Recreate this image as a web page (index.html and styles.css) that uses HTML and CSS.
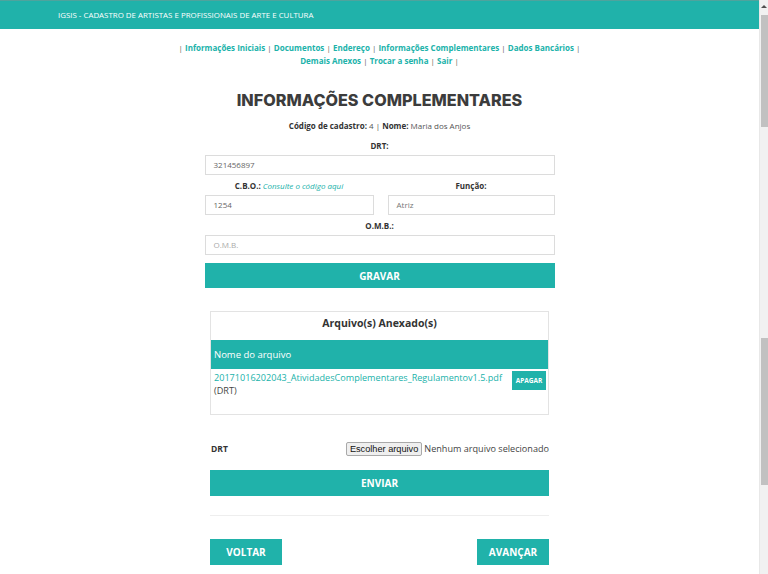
FILE: index.html
```html
<!DOCTYPE html>
<html lang="pt-BR">
<head>
<meta charset="utf-8">
<title>IGSIS - Informações Complementares</title>
<link rel="stylesheet" href="styles.css">
</head>
<body>
<div class="viewport">
  <header class="topbar"><span class="brand">IGSIS - CADASTRO DE ARTISTAS E PROFISSIONAIS DE ARTE E CULTURA</span></header>
  <nav class="menu">
    <div class="menu-line"><span class="sep">|</span> <a>Informações Iniciais</a> <span class="sep">|</span> <a>Documentos</a> <span class="sep">|</span> <a>Endereço</a> <span class="sep">|</span> <a>Informações Complementares</a> <span class="sep">|</span> <a>Dados Bancários</a> <span class="sep">|</span></div>
    <div class="menu-line"><a>Demais Anexos</a> <span class="sep">|</span> <a>Trocar a senha</a> <span class="sep">|</span> <a>Sair</a> <span class="sep">|</span></div>
  </nav>
  <main class="content">
    <h1 class="title">INFORMAÇÕES COMPLEMENTARES</h1>
    <p class="meta"><b>Código de cadastro:</b> 4 | <b>Nome:</b> Maria dos Anjos</p>
    <form class="form">
      <div class="field">
        <label class="label">DRT:</label>
        <div class="input">321456897</div>
      </div>
      <div class="row">
        <div class="field">
          <label class="label">C.B.O.: <i class="hint">Consulte o código aqui</i></label>
          <div class="input">1254</div>
        </div>
        <div class="field">
          <label class="label">Função:</label>
          <div class="input muted">Atriz</div>
        </div>
      </div>
      <div class="field">
        <label class="label">O.M.B.:</label>
        <div class="input placeholder">O.M.B.</div>
      </div>
      <div class="btn btn-block btn-gravar">GRAVAR</div>
    </form>

    <section class="lower">
      <div class="panel">
        <div class="panel-title">Arquivo(s) Anexado(s)</div>
        <div class="thead">Nome do arquivo</div>
        <div class="trow">
          <div class="file-info">
            <a class="file-link">20171016202043_AtividadesComplementares_Regulamentov1.5.pdf</a>
            <div class="file-type">(DRT)</div>
          </div>
          <div class="btn btn-small">APAGAR</div>
        </div>
      </div>
      <div class="upload-row">
        <span class="upload-label">DRT</span>
        <span class="file-input"><span class="file-btn">Escolher arquivo</span><span class="file-none">Nenhum arquivo selecionado</span></span>
      </div>
      <div class="btn btn-block btn-enviar">ENVIAR</div>
      <div class="divider"></div>
      <div class="pager">
        <div class="btn btn-nav">VOLTAR</div>
        <div class="btn btn-nav">AVANÇAR</div>
      </div>
    </section>
  </main>
</div>
<aside class="scrollbar">
  <div class="sb-arrow"></div>
  <div class="sb-thumb sb-thumb1"></div>
  <div class="sb-gap1"></div>
  <div class="sb-thumb sb-thumb2"></div>
</aside>
</body>
</html>
```

FILE: styles.css
```css
* { box-sizing: border-box; }
html, body { margin: 0; padding: 0; }
body {
  width: 768px;
  height: 574px;
  overflow: hidden;
  display: flex;
  background: #fff;
  font-family: "Open Sans", "Liberation Sans", sans-serif;
  color: #444;
}
.viewport {
  width: 759px;
  display: flex;
  flex-direction: column;
}
.topbar {
  height: 29px;
  background: #20b2aa;
  border-top: 1px solid #4fa39d;
  display: flex;
  align-items: center;
  padding-left: 58px;
}
.brand {
  color: #fff;
  font-size: 7.9px;
}
.menu {
  padding-top: 12px;
  text-align: center;
  font-size: 8px;
  font-weight: 700;
  line-height: 13px;
}
.menu a { color: #20b2aa; }
.sep { color: #666; font-weight: 400; }
.content {
  display: flex;
  flex-direction: column;
  align-items: center;
}
.title {
  margin: 22px 0 0;
  font-family: "Inter", "Open Sans", sans-serif;
  font-weight: 800;
  font-size: 16.2px;
  line-height: 22px;
  color: #3c3c3c;
}
.meta {
  margin: 9px 0 0;
  font-size: 8px;
  line-height: 12px;
  color: #555;
}
.meta b { color: #333; }
.form {
  width: 350px;
  margin-top: 8px;
  display: flex;
  flex-direction: column;
  gap: 5px;
}
.field { display: flex; flex-direction: column; }
.label {
  text-align: center;
  font-size: 8px;
  font-weight: 700;
  color: #333;
  line-height: 12px;
  margin-bottom: 3px;
}
.hint { color: #20b2aa; font-weight: 400; }
.input {
  height: 20px;
  border: 1px solid #dcdcdc;
  padding-left: 8px;
  font-size: 8px;
  line-height: 18px;
  color: #666;
}
.muted { color: #777; }
.placeholder { color: #aaa; }
.row {
  display: grid;
  grid-template-columns: 169px 167px;
  justify-content: space-between;
}
.btn {
  background: #20b2aa;
  color: #fff;
  font-weight: 700;
  display: flex;
  align-items: center;
  justify-content: center;
}
.btn-block { height: 25px; font-size: 10px; }
.btn-gravar { margin-top: 3px; }
.lower {
  width: 339px;
  margin-top: 23px;
  display: flex;
  flex-direction: column;
}
.panel {
  border: 1px solid #e3e3e3;
  height: 104px;
  display: flex;
  flex-direction: column;
}
.panel-title {
  text-align: center;
  font-size: 10.5px;
  font-weight: 700;
  color: #333;
  height: 28px;
  line-height: 22px;
}
.thead {
  background: #20b2aa;
  color: #fff;
  font-size: 9.5px;
  height: 29px;
  line-height: 29px;
  padding-left: 3px;
}
.trow {
  display: flex;
  justify-content: space-between;
  padding: 1px 2px 0 3px;
}
.file-info { font-size: 9.1px; line-height: 13px; padding-top: 1px; }
.file-link { color: #20b2aa; }
.file-type { color: #444; }
.btn-small {
  width: 34px;
  height: 19px;
  font-size: 6.5px;
  margin-top: 1px;
}
.upload-row {
  margin-top: 26px;
  height: 15px;
  display: flex;
  justify-content: space-between;
  align-items: center;
}
.upload-label { font-size: 8.5px; font-weight: 700; color: #333; padding-left: 1px; }
.file-input { display: flex; align-items: center; }
.file-btn {
  height: 14px;
  padding: 0 3px;
  border: 1px solid #a9a9a9;
  border-radius: 2px;
  background: #efefef;
  font-family: "Liberation Sans", sans-serif;
  font-size: 9.2px;
  line-height: 12px;
  color: #111;
}
.file-none {
  margin-left: 2px;
  font-size: 9.1px;
  color: #444;
}
.btn-enviar { margin-top: 14px; height: 26px; }
.divider {
  margin-top: 19px;
  border-top: 1px solid #eee;
}
.pager {
  margin-top: 23px;
  display: flex;
  justify-content: space-between;
}
.btn-nav { width: 72px; height: 26px; font-size: 10px; }
.scrollbar {
  width: 9px;
  height: 574px;
  background: #f1f1f1;
  display: flex;
  flex-direction: column;
  align-items: center;
  border-left: 1px solid #e8e8e8;
}
.sb-arrow {
  width: 0; height: 0;
  margin-top: 5px;
  margin-bottom: 7px;
  border-left: 3px solid transparent;
  border-right: 3px solid transparent;
  border-bottom: 3px solid #505050;
}
.sb-thumb { width: 7px; background: #c1c1c1; }
.sb-thumb1 { height: 112px; }
.sb-gap1 { height: 211px; }
.sb-thumb2 { height: 147px; }
```
